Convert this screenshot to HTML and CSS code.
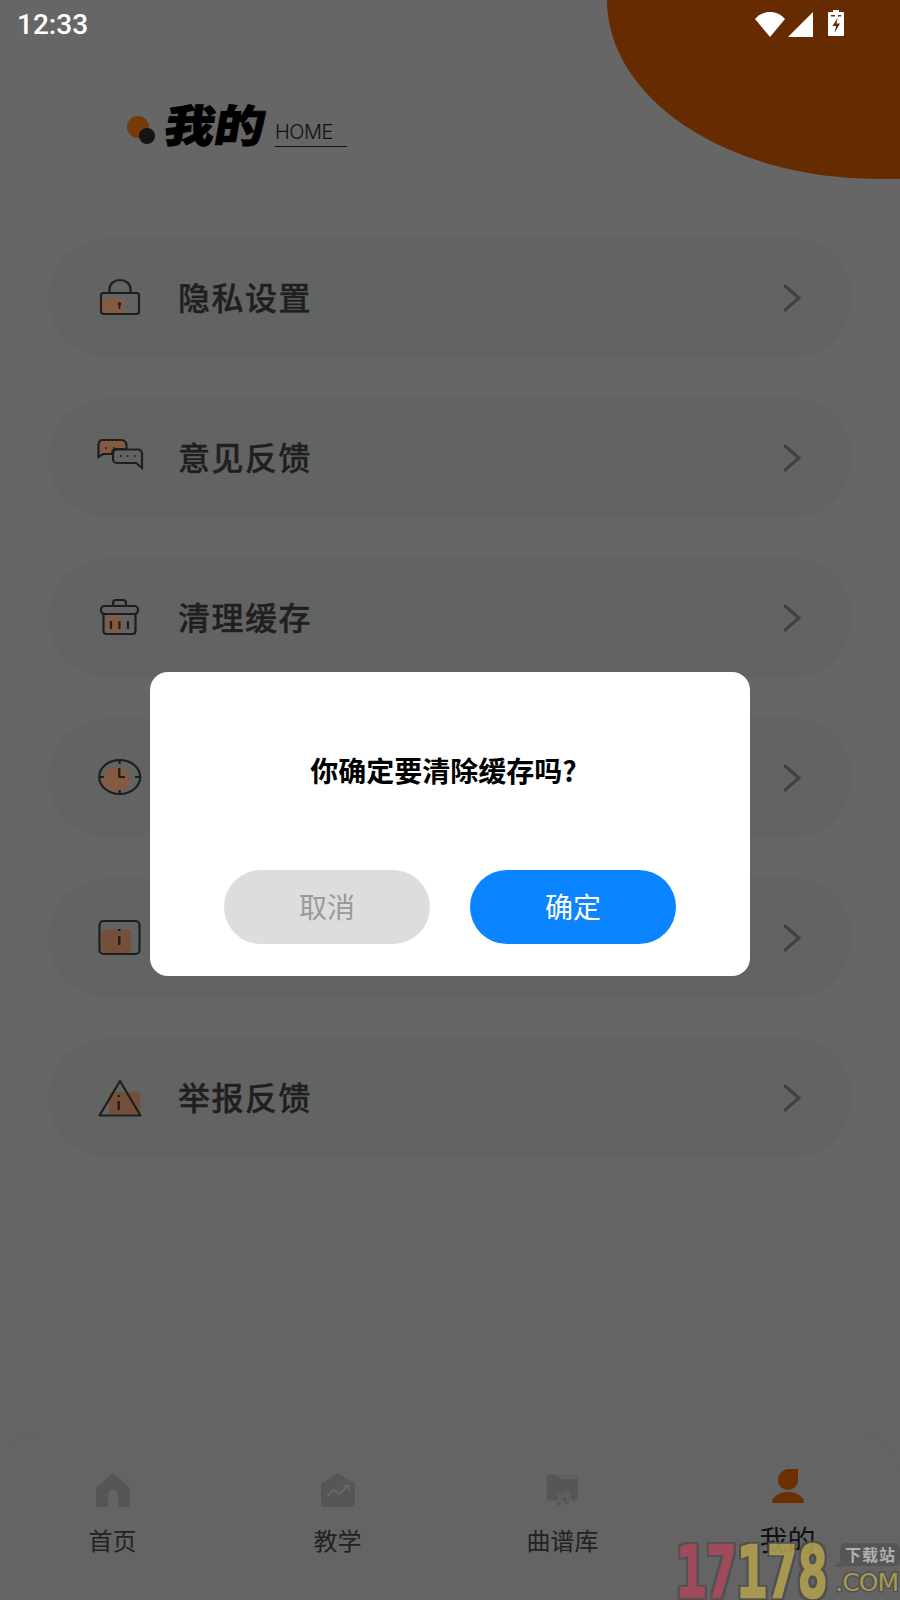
FILE: index.html
```html
<!DOCTYPE html>
<html lang="zh-CN">
<head>
  <meta charset="UTF-8" />
  <meta name="viewport" content="width=device-width, initial-scale=1.0" />
  <title>我的</title>
  <link rel="stylesheet" href="styles.css">
</head>
<body>
  <div class="blob"></div>

  <div class="status-bar">
    <span class="time">12:33</span>
    <div class="status-icons">
      <svg width="30" height="26" viewBox="0 0 30 26"><path d="M0 8C4 3.500 9 1 15 1s11 2.500 15 7L15 26z" fill="#fff"/></svg>
      <svg width="26" height="26" viewBox="0 0 26 26"><path d="M25 1v25H0z" fill="#fff"/></svg>
      <svg class="battery" width="16" height="26" viewBox="0 0 16 26"><path d="M5 0h6v2h4a1 1 0 0 1 1 1v22a1 1 0 0 1-1 1H1a1 1 0 0 1-1-1V3a1 1 0 0 1 1-1h4z" fill="#fff"/><path d="M9.500 8l-5 8h3.500l-1.500 7 5.500-9.500H8.500z" fill="#662b00"/><path d="M3 5h4v1.500H3zM10 5h3v1.500h-3z" fill="#662b00"/></svg>
    </div>
  </div>

  <header class="page-title">
    <div class="dots"><span class="dot-orange"></span><span class="dot-black"></span></div>
    <h1>我的</h1>
    <span class="home-tag">HOME</span>
  </header>

  <div class="menu">
    <div class="menu-row">
      <svg class="menu-icon" viewBox="0 0 44 40" fill="none" stroke="#1e1e1e" stroke-width="2.200">
        <rect x="3" y="20" width="23" height="15" fill="#835a42" stroke="none"/>
        <rect x="3" y="15" width="38" height="21" rx="2.500"/>
        <path d="M11.500 15V11a10.500 9 0 0 1 21 0v4"/>
        <circle cx="21.500" cy="26" r="1.800" fill="#1e1e1e" stroke="none"/><path d="M21.500 26v5" stroke-width="1.600"/>
      </svg>
      <span class="menu-label">隐私设置</span>
      <svg class="chevron" viewBox="0 0 22 32"><path d="M4 4l14 12L4 28" fill="none" stroke="#404040" stroke-width="3" stroke-linecap="round"/></svg>
    </div>
    <div class="menu-row">
      <svg class="menu-icon" viewBox="0 0 44 40" fill="none" stroke="#1e1e1e" stroke-width="2.200">
        <path d="M0.500 19V6a4 4 0 0 1 4-4h19a5 5 0 0 1 5 5v4H18a4 4 0 0 0-4 4v1H5z" fill="#835a42"/>
        <path d="M19 11.500h21a4 4 0 0 1 4 4V30l-6-5H19a4 4 0 0 1-4-4v-5.500a4 4 0 0 1 4-4z"/>
        <path d="M7 10h1.500M15 10h1.500M22 18h1.500M29 18h1.500M36 18h1.500" stroke-width="2"/>
      </svg>
      <span class="menu-label">意见反馈</span>
      <svg class="chevron" viewBox="0 0 22 32"><path d="M4 4l14 12L4 28" fill="none" stroke="#404040" stroke-width="3" stroke-linecap="round"/></svg>
    </div>
    <div class="menu-row">
      <svg class="menu-icon" viewBox="0 0 44 40" fill="none" stroke="#1e1e1e" stroke-width="2.200">
        <circle cx="16" cy="26" r="9.500" fill="#835a42" stroke="none"/>
        <path d="M15 8V5a3 3 0 0 1 3-3h7a3 3 0 0 1 3 3v3"/>
        <rect x="3" y="8" width="37" height="8" rx="3.500"/>
        <path d="M5.500 16v17a3 3 0 0 0 3 3h26a3 3 0 0 0 3-3V16"/>
        <path d="M13 23v8M21.500 23v8M30 23v8"/>
      </svg>
      <span class="menu-label">清理缓存</span>
      <svg class="chevron" viewBox="0 0 22 32"><path d="M4 4l14 12L4 28" fill="none" stroke="#404040" stroke-width="3" stroke-linecap="round"/></svg>
    </div>
    <div class="menu-row">
      <svg class="menu-icon" viewBox="0 0 44 40" fill="none" stroke="#1e1e1e" stroke-width="2.200">
        <ellipse cx="18.500" cy="21.500" rx="13.500" ry="12.500" fill="#835a42" stroke="none"/>
        <ellipse cx="21.700" cy="19" rx="20.500" ry="17"/>
        <path d="M21.700 2v4M21.700 32v4M1 19h5M37 19h5M21.300 10v9H27"/>
      </svg>
      <span class="menu-label">定时关闭</span>
      <svg class="chevron" viewBox="0 0 22 32"><path d="M4 4l14 12L4 28" fill="none" stroke="#404040" stroke-width="3" stroke-linecap="round"/></svg>
    </div>
    <div class="menu-row">
      <svg class="menu-icon" viewBox="0 0 44 40" fill="none" stroke="#1e1e1e" stroke-width="2.200">
        <rect x="3.700" y="11.500" width="29" height="23.500" rx="3" fill="#744f39" stroke="none"/>
        <rect x="1.500" y="3" width="40" height="33" rx="4"/>
        <path d="M21.300 11v2M21.300 18v9" stroke-width="2.400"/>
      </svg>
      <span class="menu-label">关于我们</span>
      <svg class="chevron" viewBox="0 0 22 32"><path d="M4 4l14 12L4 28" fill="none" stroke="#404040" stroke-width="3" stroke-linecap="round"/></svg>
    </div>
    <div class="menu-row">
      <svg class="menu-icon" viewBox="0 0 44 40" fill="none" stroke="#1e1e1e" stroke-width="2.200">
        <path d="M11.300 17a3 3 0 0 1 3-3h25a3 3 0 0 1 3 3v19h-31z" fill="#744f39" stroke="none"/>
        <path d="M22 3L1.500 37.500h41z" stroke-linejoin="round"/>
        <path d="M20.700 17v2M20.700 23v9" stroke-width="2.400"/>
      </svg>
      <span class="menu-label">举报反馈</span>
      <svg class="chevron" viewBox="0 0 22 32"><path d="M4 4l14 12L4 28" fill="none" stroke="#404040" stroke-width="3" stroke-linecap="round"/></svg>
    </div>
  </div>

  <nav class="tab-bar">
    <div class="tab">
      <svg class="tab-icon" viewBox="0 0 34 34"><path d="M17 0L34 15v18a1 1 0 0 1-1 1H22V22a5 5 0 0 0-10 0v12H1a1 1 0 0 1-1-1V15z" fill="#565656"/></svg>
      <span>首页</span>
    </div>
    <div class="tab">
      <svg class="tab-icon" viewBox="0 0 34 34"><path d="M17 0L34 11v22a1 1 0 0 1-1 1H1a1 1 0 0 1-1-1V11z" fill="#565656"/><path d="M6 23l7-6 5 4 9-8M22 13h6v5" fill="none" stroke="#6c6c6c" stroke-width="1.600"/></svg>
      <span>教学</span>
    </div>
    <div class="tab">
      <svg class="tab-icon" viewBox="0 0 34 36"><path d="M0 5a3 3 0 0 1 3-3h8l4 4h18v20a3 3 0 0 1-3 3H3a3 3 0 0 1-3-3z" fill="#565656"/><path d="M9 2h21a3 3 0 0 1 3 3H12z" fill="#5e5e5e"/><path d="M14 33v-9l9-2v9" fill="none" stroke="#666" stroke-width="4"/><path d="M14 33v-9l9-2v9" fill="none" stroke="#5a5a5a" stroke-width="1.500"/><circle cx="12.500" cy="33" r="2.500" fill="#5a5a5a"/><circle cx="21" cy="31" r="2.500" fill="#5a5a5a"/></svg>
      <span>曲谱库</span>
    </div>
    <div class="tab tab-active">
      <svg class="tab-icon" viewBox="0 0 32 34"><path d="M16 0h10v11a10 10 0 1 1-20 0A11 11 0 0 1 16 0z" fill="#6b2f00"/><path d="M0 34a16 11 0 0 1 32 0z" fill="#6b2f00"/></svg>
      <span>我的</span>
    </div>
  </nav>

  <div class="modal-layer">
    <div class="dialog">
      <p class="dialog-title">你确定要清除缓存吗?</p>
      <div class="dialog-actions">
        <button class="btn btn-cancel">取消</button>
        <button class="btn btn-ok">确定</button>
      </div>
    </div>
  </div>

  <div class="watermark">
    <span class="wm-digits"><span class="wm-red">17</span>178</span>
    <div class="wm-side">
      <span class="wm-badge">下载站</span>
      <span class="wm-com">.COM</span>
    </div>
  </div>
</body>
</html>
```

FILE: styles.css
```css
* {
  box-sizing: border-box;
}
html, body {
  margin: 0;
  height: 1600px;
  overflow: hidden;
}
body {
  position: relative;
  background-color: #666;
  font-family: "Noto Sans CJK SC", "Noto Sans", sans-serif;
  color: #2a2a2a;
}

/* top right shape */
.blob {
  position: absolute;
  right: 0;
  top: 0;
  width: 293px;
  height: 179px;
  border-bottom-left-radius: 270px 179px;
  background-color: #662b00;
}

.status-bar {
  position: relative;
  height: 50px;
  display: flex;
  justify-content: space-between;
  align-items: flex-start;
  padding: 8px 56px 0 17px;
  color: #fff;
}
.time {
  font-family: Roboto, sans-serif;
  font-size: 28px;
  font-weight: 500;
  line-height: 34px;
}
.status-icons {
  display: flex;
  align-items: flex-start;
  gap: 3px;
  padding-top: 3px;
}
.battery {
  margin-left: 11px;
  margin-top: -1px;
}

.page-title {
  position: relative;
  display: flex;
  align-items: flex-end;
  height: 50px;
  margin: 54px 0 0 127px;
}
.dots {
  position: relative;
  width: 30px;
  height: 50px;
}
.dot-orange, .dot-black {
  position: absolute;
  border-radius: 50%;
}
.dot-orange {
  left: 0;
  top: 12px;
  width: 22px;
  height: 22px;
  background-color: #733a0a;
}
.dot-black {
  left: 12px;
  top: 24px;
  width: 16px;
  height: 16px;
  background: #141414;
}
.page-title h1 {
  margin: 0 0 0 9px;
  font-size: 50px;
  line-height: 50px;
  font-weight: 900;
  color: #000;
  -webkit-text-stroke: 1px #000;
  transform: translateY(-6px) skewX(-10deg) scaleY(0.88);
}
.home-tag {
  width: 72px;
  margin: 0 0 7px 9px;
  padding: 0 0 2px;
  border-bottom: 1px solid #111;
  font-family: Inter, sans-serif;
  font-weight: 300;
  font-size: 20px;
  letter-spacing: -0.5px;
  line-height: 24px;
  color: #111;
}

.menu {
  position: absolute;
  left: 48px;
  top: 238px;
  width: 804px;
  display: flex;
  flex-direction: column;
  gap: 40px;
}
.menu-row {
  height: 120px;
  border-radius: 60px;
  background-color: #626463;
  display: flex;
  align-items: center;
  padding: 0 49px 0 50px;
}
.menu-icon {
  width: 44px;
  height: 40px;
  overflow: visible;
}
.menu-label {
  margin-left: 36px;
  padding-bottom: 4px;
  flex: 1;
  font-size: 32px;
  font-weight: 500;
  color: #1f1f1f;
  -webkit-text-stroke: 0.4px #1f1f1f;
  letter-spacing: 1.500px;
}
.chevron {
  width: 22px;
  height: 32px;
}

.tab-bar {
  position: absolute;
  left: 0;
  right: 0;
  top: 1432px;
  height: 168px;
  border-radius: 40px 40px 0 0;
  background-color: #646464;
  box-shadow: 0 -4px 6px rgba(0, 0, 0, 0.03);
  display: grid;
  grid-template-columns: repeat(4, 1fr);
}
.tab {
  display: flex;
  flex-direction: column;
  align-items: center;
  padding-top: 41px;
  font-size: 24px;
  line-height: 34px;
  color: #222;
}
.tab-icon {
  width: 34px;
  height: 34px;
  margin-bottom: 16px;
}
.tab-active {
  padding-top: 37px;
  font-size: 28px;
  color: #111;
}
.tab-active .tab-icon {
  width: 32px;
  margin-bottom: 19px;
}

.modal-layer {
  position: absolute;
  left: 0;
  right: 0;
  top: 48px;
  bottom: 0;
  display: flex;
  align-items: center;
  justify-content: center;
}
.dialog {
  width: 600px;
  height: 304px;
  border-radius: 18px;
  background-color: #fff;
  padding: 0 74px;
  display: flex;
  flex-direction: column;
  justify-content: space-between;
}
.dialog-title {
  margin: 77px 0 0;
  padding-right: 13px;
  font-size: 28px;
  line-height: 42px;
  font-weight: 700;
  color: #000;
  text-align: center;
}
.dialog-actions {
  display: flex;
  gap: 40px;
  margin-bottom: 32px;
}
.btn {
  flex: 1;
  height: 74px;
  border: none;
  border-radius: 37px;
  padding: 0 0 2px;
  font-family: inherit;
  font-size: 28px;
}
.btn-cancel {
  background-color: #ddd;
  color: #999;
}
.btn-ok {
  background-color: #0a84ff;
  color: #fff;
}

/* download site stamp, sits over everything */
.watermark {
  position: absolute;
  left: 676px;
  top: 1536px;
  width: 224px;
  height: 64px;
  display: flex;
  opacity: 0.88;
}
.wm-digits {
  width: 158px;
  margin-top: 7px;
  font-family: "DejaVu Sans Mono", monospace;
  font-weight: 700;
  font-size: 72px;
  line-height: 58px;
  white-space: nowrap;
  color: #b0a04e;
  -webkit-text-stroke: 2.500px currentColor;
  text-shadow: 4px 0 #4f4f4f, -4px 0 #4f4f4f, 0 3px #4f4f4f, 0 -3px #4f4f4f,
    4px 3px #4f4f4f, -4px 3px #4f4f4f, 4px -3px #4f4f4f, -4px -3px #4f4f4f;
  transform: scaleX(0.7);
  transform-origin: left center;
}
.wm-red {
  color: #a8485a;
}
.wm-side {
  display: flex;
  flex-direction: column;
  align-items: flex-end;
  flex: 1;
  min-width: 0;
}
.wm-badge {
  position: relative;
  margin-top: 7px;
  padding: 0 4px 0 5px;
  height: 23px;
  border-radius: 6px;
  background-color: #555;
  color: #bbb;
  font-size: 16px;
  letter-spacing: 1px;
  line-height: 23px;
  font-weight: 700;
  white-space: nowrap;
}
.wm-badge::before {
  content: "";
  position: absolute;
  left: -6px;
  bottom: -1px;
  border-right: 9px solid #555;
  border-top: 8px solid transparent;
}
.wm-com {
  margin: 3px 2px 0 0;
  font-family: "DejaVu Sans", sans-serif;
  font-size: 25px;
  line-height: 28px;
  letter-spacing: -1px;
  white-space: nowrap;
  color: #b0a04e;
  -webkit-text-stroke: 3px #4f4f4f;
  paint-order: stroke fill;
}
```
